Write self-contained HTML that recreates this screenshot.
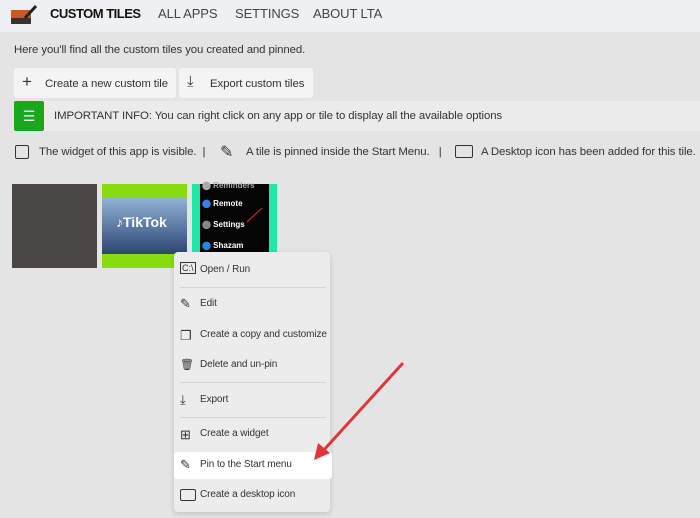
<!DOCTYPE html>
<html><head><style>
body{margin:0;width:700px;height:518px;background:#e4e4e4;font-family:"Liberation Sans",sans-serif;position:relative;overflow:hidden;color:#222}
.hdr{position:absolute;left:0;top:0;width:700px;height:32px;background:#eef0f2}
.hdr span{position:absolute;top:6px;font-size:13px;color:#444;letter-spacing:-0.1px;white-space:nowrap}
.c{position:absolute;left:0;top:32px;width:700px;height:486px;background:#e4e4e4}
.t{position:absolute;font-size:11.4px;color:#333;white-space:nowrap;letter-spacing:-0.1px}
.btn{position:absolute;background:#f4f4f4;border-radius:3px;height:30px}
.tile{position:absolute;top:184px;width:85px;height:84px}
.menu{position:absolute;left:174px;top:252px;width:156px;height:260px;background:#ececec;border-radius:4px;box-shadow:0 2px 6px rgba(0,0,0,.15)}
.mi{position:absolute;left:26px;font-size:10px;color:#333;white-space:nowrap;letter-spacing:-0.1px}
.ic{position:absolute;left:6px;font-size:13px;color:#333}
.sep{position:absolute;left:6px;width:146px;height:1px;background:#d4d4d4}
</style></head><body>
<div class="hdr">
<svg style="position:absolute;left:10px;top:4px" width="28" height="22"><rect x="1" y="6" width="20" height="14" fill="#d2561c"/><rect x="1" y="14" width="20" height="6" fill="#333"/><path d="M15 14 L26 2" stroke="#222" stroke-width="3"/></svg>
<span style="left:50px;font-weight:bold;color:#111;letter-spacing:-0.5px">CUSTOM TILES</span>
<span style="left:158px">ALL APPS</span>
<span style="left:235px">SETTINGS</span>
<span style="left:313px">ABOUT LTA</span>
</div>
<div class="c"></div>
<div class="t" style="left:14px;top:44px">Here you'll find all the custom tiles you created and pinned.</div>
<div class="btn" style="left:14px;top:68px;width:162px"></div>
<div class="t" style="left:22px;top:72px;font-size:17px">+</div>
<div class="t" style="left:45px;top:78px">Create a new custom tile</div>
<div class="btn" style="left:179px;top:68px;width:134px"></div>
<div class="t" style="left:187px;top:73px;font-size:15px">⤓</div>
<div class="t" style="left:210px;top:78px">Export custom tiles</div>
<div style="position:absolute;left:14px;top:101px;width:686px;height:30px;background:#ebebeb"></div>
<div style="position:absolute;left:14px;top:101px;width:30px;height:30px;background:#18a81b;border-radius:2px;color:#fff;font-size:14px;text-align:center;line-height:30px">☰</div>
<div class="t" style="left:54px;top:110px">IMPORTANT INFO: You can right click on any app or tile to display all the available options</div>
<div style="position:absolute;left:15px;top:145px;width:12px;height:12px;border:1.5px solid #333;border-radius:2px"></div>
<div class="t" style="left:39px;top:146px">The widget of this app is visible. &nbsp;| </div>
<div class="t" style="left:220px;top:142px;font-size:16px">✎</div>
<div class="t" style="left:246px;top:146px">A tile is pinned inside the Start Menu. &nbsp; | </div>
<div style="position:absolute;left:455px;top:145px;width:16px;height:11px;border:1.5px solid #333;border-radius:2px"></div>
<div class="t" style="left:481px;top:146px">A Desktop icon has been added for this tile.</div>
<div class="tile" style="left:12px;background:#4a4644"></div>
<div class="tile" style="left:102px;background:#86dc0c"><div style="position:absolute;left:0;top:14px;width:85px;height:56px;background:linear-gradient(#8fb2d6,#2c4670)"></div><div style="position:absolute;left:14px;top:30px;color:#fff;font-weight:bold;font-size:14px">♪TikTok</div></div>
<div class="tile" style="left:192px;background:#1ee8a8"><div style="position:absolute;left:8px;top:0;width:69px;height:84px;background:#050505;color:#fff;font-size:8px;font-weight:bold">
<div style="position:absolute;left:2px;top:-3px;color:#aaa">⬤ Reminders</div><div style="position:absolute;left:2px;top:15px"><span style="color:#3a7ee6">⬤</span> Remote</div><div style="position:absolute;left:2px;top:36px"><span style="color:#888">⬤</span> Settings</div><div style="position:absolute;left:2px;top:57px"><span style="color:#1e88e5">⬤</span> Shazam</div></div></div>
<div class="menu">
<div class="ic" style="top:10px;font-size:9px;border:1px solid #333;padding:0 1px">C:\</div><div class="mi" style="top:12px">Open / Run</div>
<div class="sep" style="top:35px"></div>
<div class="ic" style="top:44px">✎</div><div class="mi" style="top:46px">Edit</div>
<div class="ic" style="top:76px">❐</div><div class="mi" style="top:77px">Create a copy and customize</div>
<div class="ic" style="top:106px;font-size:11px">🗑</div><div class="mi" style="top:107px">Delete and un-pin</div>
<div class="sep" style="top:130px"></div>
<div class="ic" style="top:140px">⤓</div><div class="mi" style="top:142px">Export</div>
<div class="sep" style="top:165px"></div>
<div class="ic" style="top:175px">⊞</div><div class="mi" style="top:176px">Create a widget</div>
<div style="position:absolute;left:0;top:200px;width:158px;height:27px;background:#fff;border-radius:3px"></div>
<div class="ic" style="top:205px">✎</div><div class="mi" style="top:207px">Pin to the Start menu</div>
<div style="position:absolute;left:6px;top:237px;width:14px;height:10px;border:1.5px solid #333;border-radius:2px"></div><div class="mi" style="top:237px">Create a desktop icon</div>
</div>
<svg style="position:absolute;left:0;top:0" width="700" height="518"><path d="M403 363 L322 452" stroke="#e0353a" stroke-width="3"/><path d="M314 460 L318 443 L330 453 Z" fill="#e0353a"/><path d="M262 208 L247 222" stroke="#e03030" stroke-width="1"/></svg>
</body></html>
